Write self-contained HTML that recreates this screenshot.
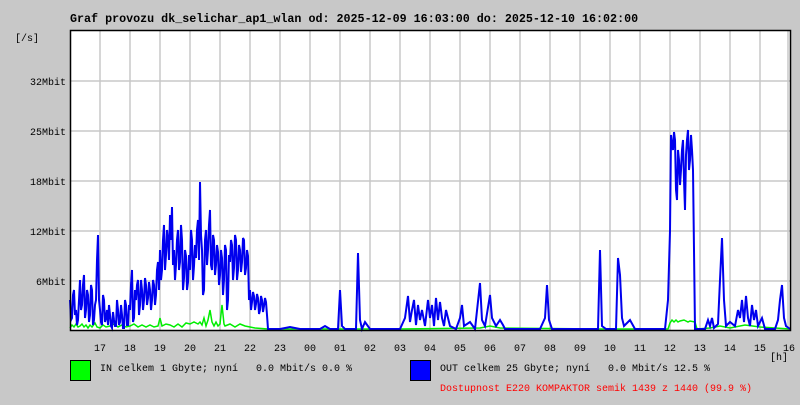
<!DOCTYPE html>
<html><head><meta charset="utf-8"><style>
body{margin:0;background:#c8c8c8;width:800px;height:400px;overflow:hidden;}
svg text{font-family:"Liberation Mono","DejaVu Sans Mono",monospace;font-size:10px;white-space:pre;}
</style></head><body>
<svg width="800" height="400" xmlns="http://www.w3.org/2000/svg" xml:space="preserve">
<rect width="800" height="400" fill="#c8c8c8"/>
<text x="70" y="22" style="font-size:11.7px;font-weight:bold">Graf provozu dk_selichar_ap1_wlan od: 2025-12-09 16:03:00 do: 2025-12-10 16:02:00</text>
<text x="15" y="41">[/s]</text>
<rect x="70" y="30" width="720" height="300" fill="#fff"/>
<g stroke="#c8c8c8" stroke-width="1.5">
<path d="M100 30V330M130 30V330M160 30V330M190 30V330M220 30V330M250 30V330M280 30V330M310 30V330M340 30V330M370 30V330M400 30V330M430 30V330M460 30V330M490 30V330M520 30V330M550 30V330M580 30V330M610 30V330M640 30V330M670 30V330M700 30V330M730 30V330M760 30V330M788 30V330"/>
<path d="M70 81H790M70 131H790M70 181H790M70 231H790M70 281H790"/>
</g>
<g fill="none" stroke-width="1.5" stroke-linejoin="miter">
<polyline stroke="#00ee00" points="70,328 72,325 74,327 76,324 78,327 80,326 82,324 84,327 86,325 88,328 90,325 92,327 95,323 97,327 100,328 103,325 106,327 110,326 114,324 118,327 122,325 126,327 130,326 134,324 138,327 142,325 146,327 150,325 154,327 158,326 160,318 162,326 166,324 170,325 174,327 178,324 182,327 186,323 190,324 194,322 198,324 200,322 202,325 204,318 206,326 208,320 210,310 212,322 214,326 216,322 218,326 220,324 222,305 224,324 225,326 230,324 235,327 240,324 245,326 250,327 255,328 268,329 400,329 480,328 490,326 500,328 600,329 668,329 670,323 672,320 674,322 676,320 678,322 680,321 684,320 688,322 690,321 695,322 697,329 710,328 720,326 730,328 745,325 760,327 790,329"/>
<polyline stroke="#0000ee" stroke-width="2" points="70,300 71,320 72,318 73,295 74,290 75,315 76,310 77,325 78,320 79,300 80,280 81,310 82,305 83,285 84,275 85,318 86,310 87,290 88,295 89,322 90,315 91,285 92,290 93,325 94,320 95,305 96,300 97,260 98,235 99,300 100,310 101,322 102,325 103,295 104,300 105,322 106,318 107,310 108,325 109,305 110,315 111,326 112,328 113,312 114,320 115,326 116,326 117,300 118,310 119,325 120,322 121,305 122,315 123,328 124,328 125,300 126,305 127,325 128,325 129,305 130,310 131,285 132,270 133,322 134,318 135,290 136,300 137,285 138,280 139,315 140,305 141,280 142,290 143,310 144,300 145,278 146,285 147,305 148,298 149,282 150,290 151,310 152,300 153,280 154,285 155,305 156,295 157,270 158,262 159,290 160,250 161,280 162,270 163,240 164,225 165,270 166,255 167,230 168,240 169,260 170,215 171,240 172,207 173,265 174,250 175,280 176,265 177,240 178,230 179,270 180,262 181,225 182,240 183,290 184,278 185,250 186,256 187,290 188,282 189,255 190,270 191,230 192,240 193,280 194,266 195,245 196,258 197,230 198,220 199,260 200,182 201,235 202,250 203,295 204,290 205,240 206,230 207,265 208,250 209,225 210,210 211,265 212,270 213,235 214,240 215,275 216,265 217,245 218,252 219,285 220,275 221,250 222,258 223,295 224,280 225,245 226,250 227,310 228,300 229,255 230,262 231,240 232,245 233,280 234,268 235,235 236,240 237,280 238,270 239,245 240,250 241,272 242,262 243,238 244,240 245,275 246,268 247,250 248,256 249,300 250,290 251,310 252,302 253,292 254,296 255,310 256,304 257,294 258,298 259,314 260,310 261,296 262,300 263,312 264,306 265,298 266,302 267,315 268,329 280,329 290,327 300,329 320,329 325,326 330,329 338,329 340,290 342,326 345,329 356,329 358,253 360,320 362,329 365,322 370,329 400,329 405,318 408,296 410,322 412,310 414,300 416,325 418,305 420,320 422,310 425,326 428,300 430,318 432,305 434,326 436,298 438,320 440,302 442,318 444,326 446,310 448,318 450,326 456,329 460,318 462,305 464,326 470,322 475,329 480,283 482,320 485,326 490,295 492,318 496,326 500,320 503,325 505,329 540,329 545,318 547,285 549,320 552,329 598,329 600,250 602,326 606,329 616,329 618,258 620,275 622,318 624,326 630,320 635,329 665,329 668,300 670,231 671,135 672,145 673,150 674,132 675,140 676,190 677,200 678,150 679,160 680,185 681,170 682,150 683,140 684,180 685,210 686,155 687,140 688,130 689,170 690,160 691,135 692,150 693,170 694,250 695,329 705,329 708,320 710,326 712,318 714,328 718,324 720,280 722,238 724,300 726,326 730,322 735,326 738,310 740,318 742,300 744,322 746,296 748,318 750,326 752,305 754,320 756,310 758,326 762,318 765,329 775,329 778,320 780,300 782,285 784,318 786,326 790,329"/>
</g>
<rect x="70.5" y="30.5" width="720" height="300" fill="none" stroke="#000" stroke-width="1.5"/>
<g>
<text x="30" y="85">32Mbit</text>
<text x="30" y="135">25Mbit</text>
<text x="30" y="185">18Mbit</text>
<text x="30" y="235">12Mbit</text>
<text x="36" y="285">6Mbit</text>
</g>
<g text-anchor="middle">
<text x="100" y="351">17</text><text x="130" y="351">18</text><text x="160" y="351">19</text><text x="190" y="351">20</text><text x="220" y="351">21</text><text x="250" y="351">22</text><text x="280" y="351">23</text><text x="310" y="351">00</text><text x="340" y="351">01</text><text x="370" y="351">02</text><text x="400" y="351">03</text><text x="430" y="351">04</text><text x="460" y="351">05</text><text x="490" y="351">06</text><text x="520" y="351">07</text><text x="550" y="351">08</text><text x="580" y="351">09</text><text x="610" y="351">10</text><text x="640" y="351">11</text><text x="670" y="351">12</text><text x="700" y="351">13</text><text x="730" y="351">14</text><text x="760" y="351">15</text><text x="789" y="351">16</text>
</g>
<text x="770" y="360">[h]</text>
<rect x="70.5" y="360.5" width="20" height="20" fill="#00ff00" stroke="#000"/>
<text x="100" y="371">IN celkem 1 Gbyte; nyní   0.0 Mbit/s 0.0 %</text>
<rect x="410.5" y="360.5" width="20" height="20" fill="#0000ff" stroke="#000"/>
<text x="440" y="371">OUT celkem 25 Gbyte; nyní   0.0 Mbit/s 12.5 %</text>
<text x="440" y="391" fill="#ff0000">Dostupnost E220 KOMPAKTOR semik 1439 z 1440 (99.9 %)</text>
</svg>
</body></html>
